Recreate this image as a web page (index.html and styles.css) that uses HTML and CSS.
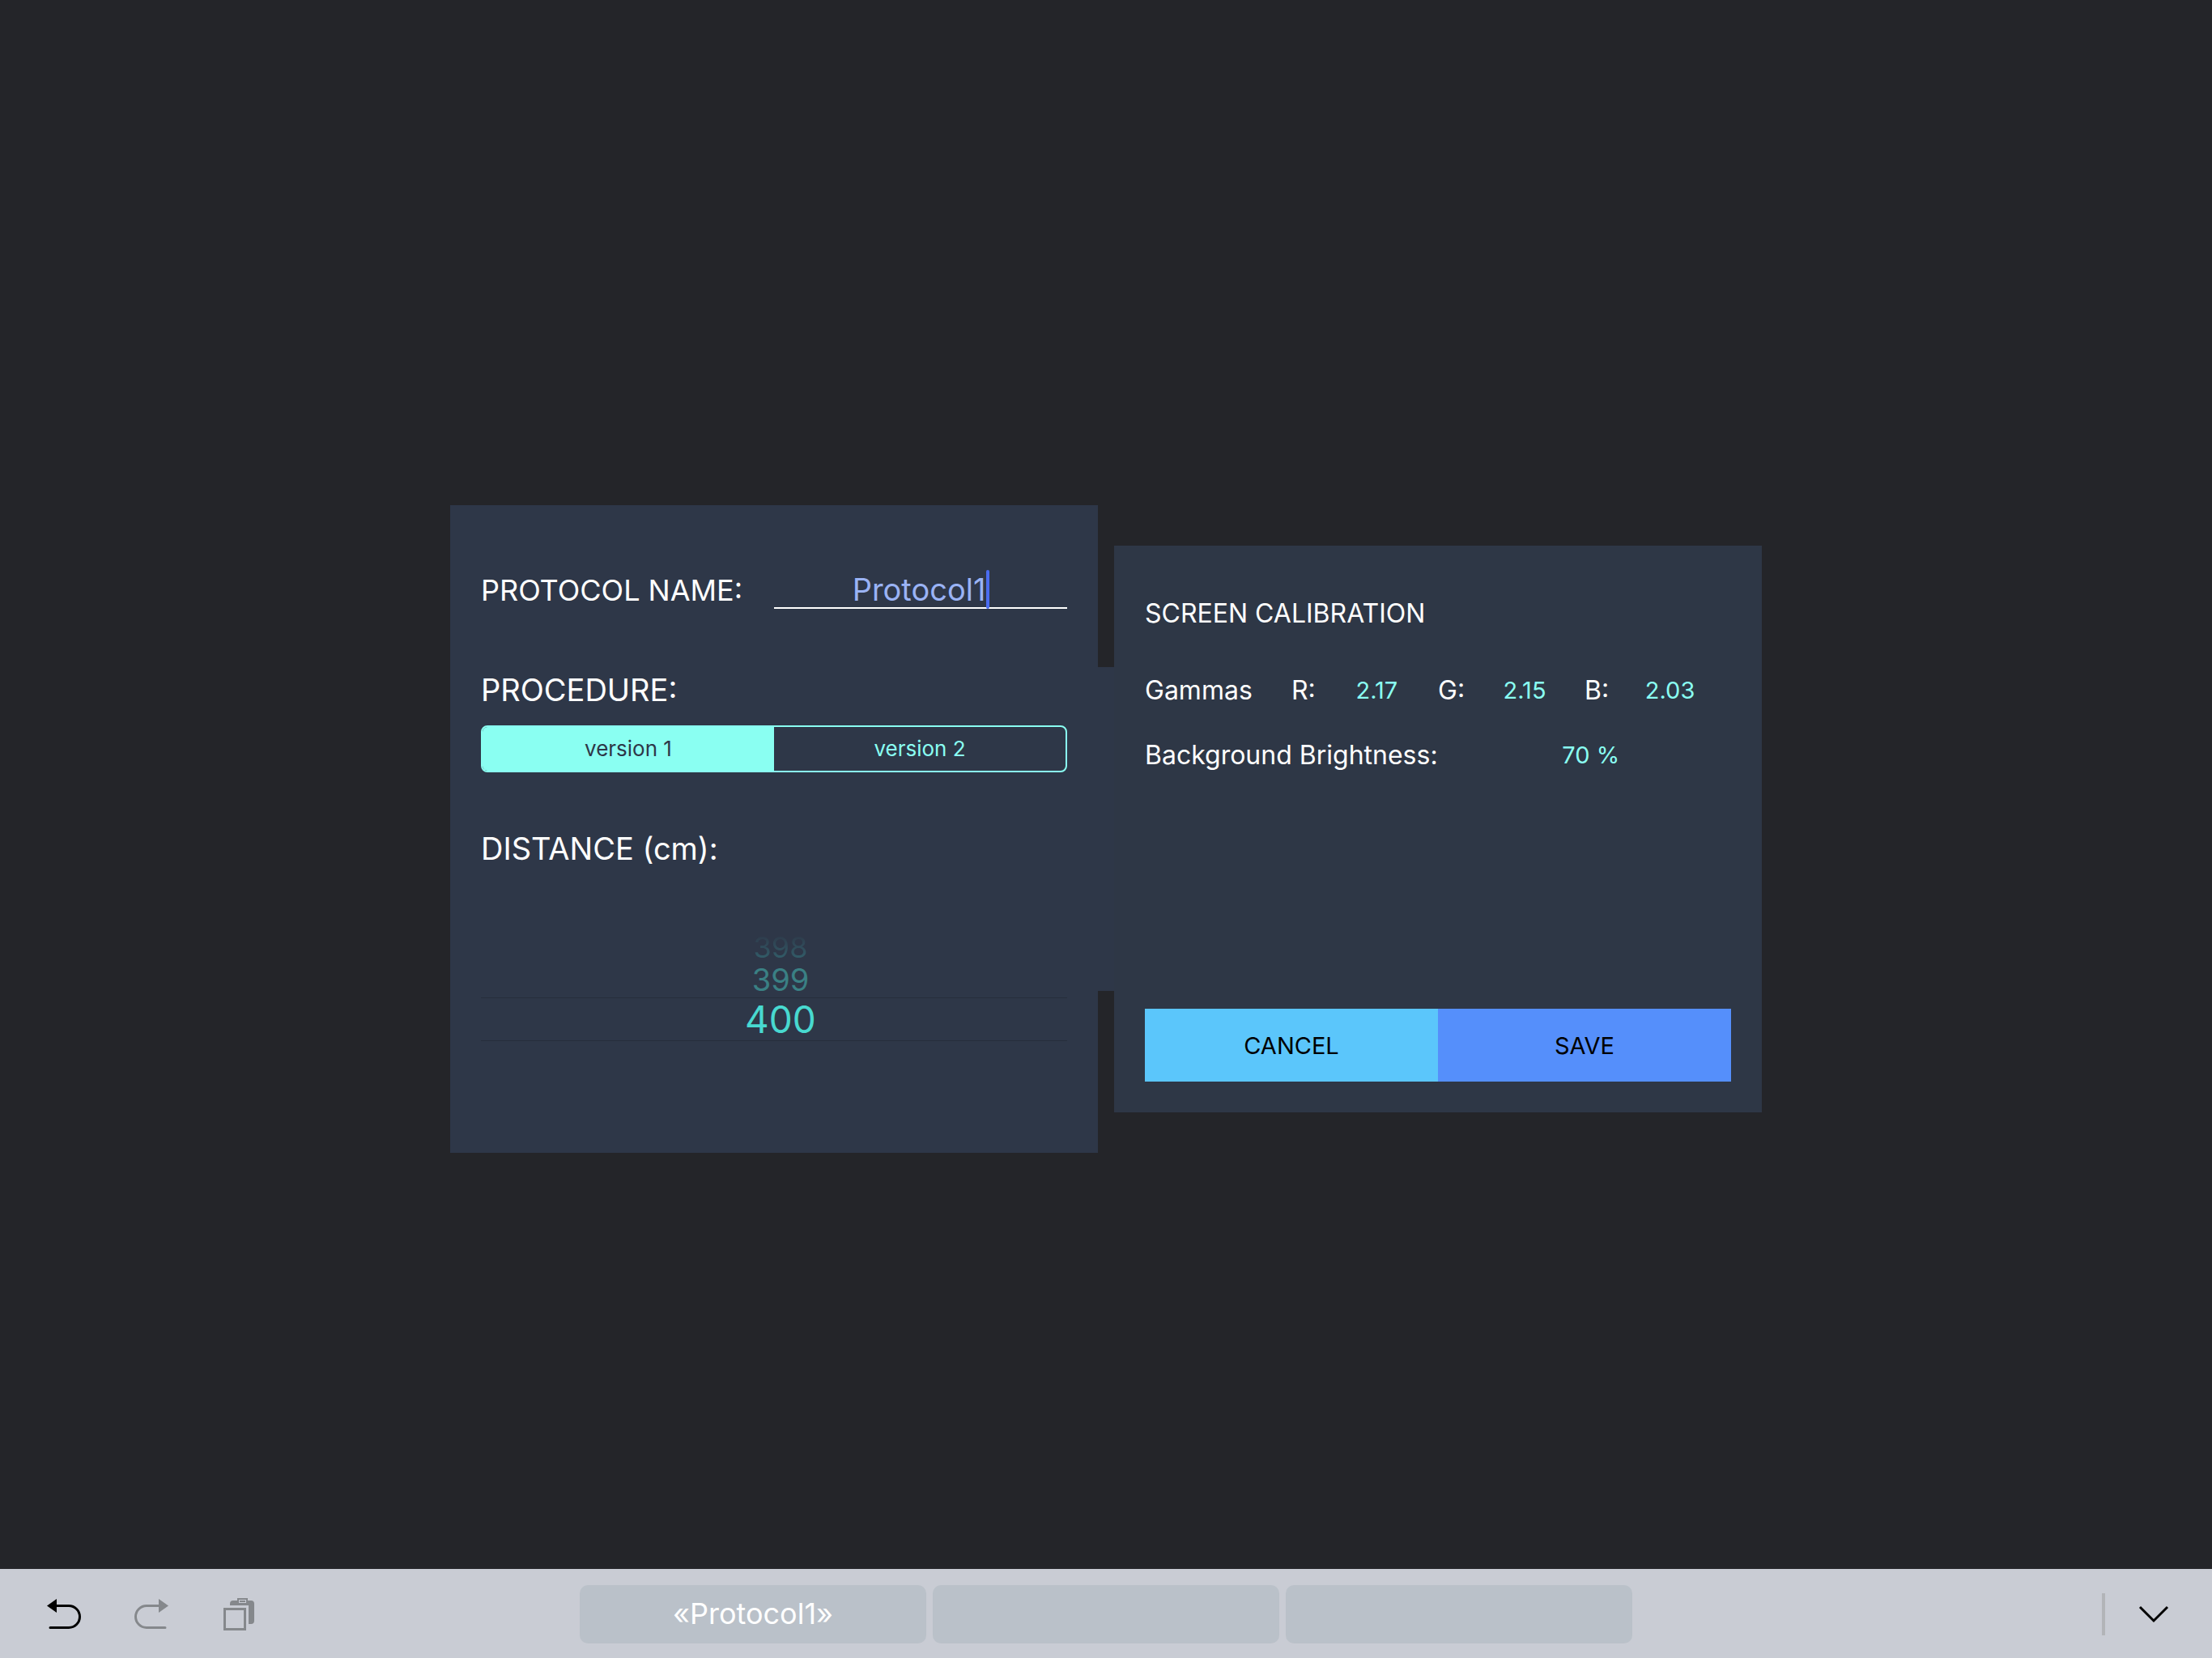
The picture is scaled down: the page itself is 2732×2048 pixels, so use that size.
FILE: index.html
```html
<!DOCTYPE html>
<html lang="en">
	<head>
		<meta charset="utf-8">
		<title>Protocol</title>
		<link rel="stylesheet" href="styles.css">
	</head>
	<body>
		<form class="protocol-form">
			<div class="panel panel-protocol">
				<div class="name-row">
					<label for="protocol-name" class="title">PROTOCOL NAME:</label>
					<div class="name-field">
						<input type="text" id="protocol-name" value="Protocol1">
						<span class="caret"></span>
					</div>
				</div>
				<fieldset class="procedure">
					<legend class="title">PROCEDURE:</legend>
					<div class="segments">
						<input type="radio" name="procedure" id="version1" checked>
						<label for="version1">version 1</label>
						<input type="radio" name="procedure" id="version2">
						<label for="version2">version 2</label>
					</div>
				</fieldset>
				<div class="title" id="distance-title">DISTANCE (cm):</div>
				<div class="picker" role="listbox" aria-labelledby="distance-title">
					<div class="picker-item far" role="option">398</div>
					<div class="picker-item near" role="option">399</div>
					<div class="picker-item selected" role="option" aria-selected="true">400</div>
				</div>
			</div>
			<div class="bridge"></div>
			<div class="panel panel-calibration">
				<div class="subtitle">SCREEN CALIBRATION</div>
				<div class="gammas">
					<span>Gammas</span>
					<div class="gamma"><span>R:</span><span class="value">2.17</span></div>
					<div class="gamma"><span>G:</span><span class="value">2.15</span></div>
					<div class="gamma"><span>B:</span><span class="value">2.03</span></div>
				</div>
				<div class="brightness">
					<span>Background Brightness:</span>
					<span class="value">70 %</span>
				</div>
				<div class="buttons">
					<button type="button" class="cancel">CANCEL</button>
					<button type="button" class="save">SAVE</button>
				</div>
			</div>
		</form>
		<div class="keyboard-bar">
			<div class="tools">
				<button type="button" aria-label="Undo">
					<svg width="44" height="44" viewBox="0 0 44 44">
						<path d="M2 11.5L14 3V20Z" fill="currentColor"/>
						<path d="M13 11.5H29A13.5 13.5 0 0 1 29 38.5H6" fill="none" stroke="currentColor" stroke-width="3" stroke-linecap="round"/>
					</svg>
				</button>
				<button type="button" aria-label="Redo" disabled>
					<svg width="44" height="44" viewBox="0 0 44 44">
						<path d="M42 11.5L30 3V20Z" fill="currentColor"/>
						<path d="M31 11.5H15A13.5 13.5 0 0 0 15 38.5H38" fill="none" stroke="currentColor" stroke-width="3" stroke-linecap="round"/>
					</svg>
				</button>
				<button type="button" aria-label="Paste" disabled>
					<svg width="44" height="44" viewBox="0 0 44 44">
						<path d="M8 11V9A4 4 0 0 1 12 5H17V2H30V5H34A4 4 0 0 1 38 9V30A4 4 0 0 1 34 34H31V11Z" fill="currentColor"/>
						<rect x="19.5" y="4.5" width="8" height="3" fill="none" stroke="#c9ccd4"/>
						<rect x="1.5" y="15.5" width="25" height="25" fill="none" stroke="currentColor" stroke-width="3"/>
					</svg>
				</button>
			</div>
			<div class="suggestions">
				<button type="button">«Protocol1»</button>
				<button type="button" aria-label="Suggestion 2"></button>
				<button type="button" aria-label="Suggestion 3"></button>
			</div>
			<div class="dismiss">
				<button type="button" aria-label="Hide keyboard">
					<svg width="38" height="22" viewBox="0 0 38 22">
						<path d="M2 2L19 19L36 2" fill="none" stroke="currentColor" stroke-width="3"/>
					</svg>
				</button>
			</div>
		</div>
	</body>
</html>
```
FILE: styles.css
```css
*{
	box-sizing:border-box;
}
html,body{
	margin:0;
	padding:0;
}
body{
	min-height:100vh;
	display:flex;
	align-items:center;
	justify-content:center;
	background:#242529;
	color:#fff;
	font-family:Inter, "Liberation Sans", sans-serif;
	font-size:32px;
	line-height:40px;
}
button,input{
	font-family:inherit;
	margin:0;
	border:none;
	padding:0;
	background:none;
}
.protocol-form{
	width:100%;
	max-width:1620px;
	display:flex;
	align-items:center;
}
.panel{
	flex:1;
	min-width:0;
	display:flex;
	flex-direction:column;
	padding:38px;
}
.panel-protocol{
	min-height:800px;
	padding-top:80px;
	background:#2e3748;
}
.panel-calibration{
	min-height:700px;
	padding-top:64px;
	background:#2e3746;
}
/* joins the two panels */
.bridge{
	width:20px;
	height:400px;
	background:#2e3748;
}
.title{
	padding:0;
	font-size:38px;
	line-height:48px;
}

.name-row{
	display:grid;
	grid-template-columns:1fr 1fr;
}
.name-row .title{
	font-size:36px;
	line-height:50px;
}
.name-field{
	position:relative;
}
.name-field input{
	width:100%;
	height:48px;
	padding:2px 4px 0 0;
	border-bottom:2px solid #fff;
	outline:none;
	color:#9ab3f5;
	font-size:38px;
	text-align:center;
}
.name-field .caret{
	position:absolute;
	top:0;
	left:calc(50% + 81px);
	width:4px;
	height:48px;
	border-radius:2px;
	background:#4a6cf0;
}

.procedure{
	margin:74px 0 70px;
	border:none;
	padding:0;
}
.segments{
	display:grid;
	grid-template-columns:1fr 1fr;
	margin-top:20px;
	border:2px solid #8afff2;
	border-radius:8px;
	overflow:hidden;
}
.segments input{
	position:absolute;
	opacity:0;
}
.segments label{
	color:#8afff2;
	font-size:26px;
	line-height:54px;
	text-align:center;
}
.segments input:checked + label{
	background:#8afff2;
	color:#2e3748;
}

.picker{
	margin-top:80px;
}
.picker-item{
	padding-left:16px;
	text-align:center;
	color:#48d9d0;
}
.picker-item.far{
	font-size:36px;
	line-height:36px;
	color:#33616c;
	-webkit-mask-image:linear-gradient(transparent, #000);
	mask-image:linear-gradient(transparent, #000);
}
.picker-item.near{
	font-size:38px;
	line-height:44px;
	color:#3a8084;
}
.picker-item.selected{
	border-top:1px solid #262e3c;
	border-bottom:1px solid #262e3c;
	font-size:46px;
	line-height:52px;
}

.gammas{
	display:grid;
	grid-template-columns:repeat(4, 1fr);
	margin-top:55px;
}
.gamma,.brightness{
	display:flex;
}
.brightness{
	gap:16px;
	margin-top:40px;
}
.value{
	flex:1;
	text-align:center;
	color:#8afff2;
	font-size:29px;
}
.buttons{
	display:flex;
	margin-top:auto;
}
.buttons button{
	flex:1;
	height:90px;
	color:#000;
	font-size:29px;
}
.buttons .cancel{
	background:#5bc6fb;
}
.buttons .save{
	background:#558ffb;
}

.keyboard-bar{
	position:fixed;
	left:0;
	right:0;
	bottom:0;
	height:110px;
	padding-top:2px;
	display:grid;
	grid-template-columns:1fr minmax(0, 1300px) 1fr;
	align-items:center;
	background:#c9ccd4;
}
.tools{
	display:flex;
	gap:66px;
	padding-left:56px;
}
.tools button{
	height:44px;
	color:#000;
}
.tools button:disabled{
	color:#85888c;
}
.keyboard-bar svg{
	display:block;
}
.suggestions{
	display:flex;
	gap:8px;
}
.suggestions button{
	flex:1;
	height:72px;
	padding-bottom:2px;
	border-radius:10px;
	background:#bac1c9;
	color:#fff;
	font-size:36px;
}
.dismiss{
	display:flex;
	justify-content:flex-end;
	padding-right:53px;
}
.dismiss button{
	height:52px;
	padding-left:41px;
	border-left:4px solid #b2b4b8;
	color:#000;
}
```
